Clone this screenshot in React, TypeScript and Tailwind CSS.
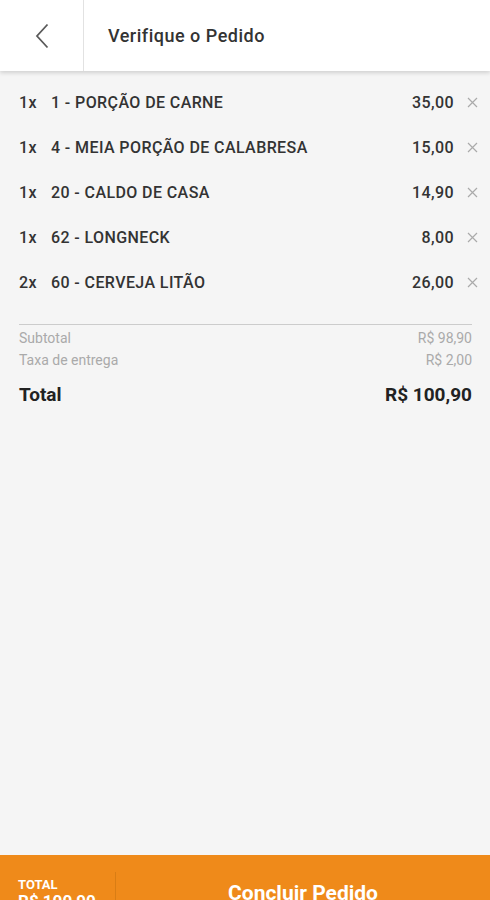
import React from "react";

type Item = { qty: string; name: string; price: string };

const items: Item[] = [
  { qty: "1x", name: "1 - PORÇÃO DE CARNE", price: "35,00" },
  { qty: "1x", name: "4 - MEIA PORÇÃO DE CALABRESA", price: "15,00" },
  { qty: "1x", name: "20 - CALDO DE CASA", price: "14,90" },
  { qty: "1x", name: "62 - LONGNECK", price: "8,00" },
  { qty: "2x", name: "60 - CERVEJA LITÃO", price: "26,00" },
];

const Row = ({ item }: { item: Item }) => {
  return (
    <div className="flex items-center h-[45px] text-[16px] tracking-[0.4px] font-medium text-[#333]">
      <span className="w-[32px]">{item.qty}</span>
      <span className="flex-1">{item.name}</span>
      <span className="text-right">{item.price}</span>
      <span className="w-[24px] flex justify-end">
        <svg width="11" height="11" viewBox="0 0 11 11" stroke="#aaa" strokeWidth="1.2">
          <path d="M1 1 L10 10 M10 1 L1 10" />
        </svg>
      </span>
    </div>
  );
};

export default function App() {
  return (
    <div
      className="w-[490px] h-[900px] bg-[#f5f5f5] flex flex-col overflow-hidden"
      style={{ fontFamily: "Roboto, 'Liberation Sans', sans-serif" }}
    >
      {/* header */}
      <div className="h-[71px] bg-white flex shadow-[0_2px_4px_rgba(0,0,0,0.15)] relative z-10">
        <div className="w-[84px] flex items-center justify-center border-r border-[#e2e2e2]">
          <svg width="14" height="26" viewBox="0 0 14 26" fill="none" stroke="#5a5a5a" strokeWidth="1.8">
            <path d="M12.5 1.5 L2 13 L12.5 24.5" />
          </svg>
        </div>
        <div className="flex items-center pl-[24px] text-[18px] tracking-[0.5px] font-medium text-[#333]">
          Verifique o Pedido
        </div>
      </div>

      {/* items */}
      <div className="flex-1 pl-[19px] pr-[12px] pt-[9px]">
        {items.map((it, i) => (
          <Row key={i} item={it} />
        ))}

        <div className="mt-[19px] mr-[6px] border-t border-[#ccc] pt-[2px]">
          <div className="flex justify-between text-[14px] text-[#aaa] h-[22px] items-center">
            <span>Subtotal</span>
            <span>R$ 98,90</span>
          </div>
          <div className="flex justify-between text-[14px] text-[#aaa] h-[22px] items-center">
            <span>Taxa de entrega</span>
            <span>R$ 2,00</span>
          </div>
          <div className="flex justify-between text-[19px] font-bold text-[#222] mt-[8px] h-[32px] items-center">
            <span>Total</span>
            <span>R$ 100,90</span>
          </div>
        </div>
      </div>

      {/* footer */}
      <div className="h-[45px] bg-[#ef8a1a] flex text-white">
        <div className="w-[115px] pl-[18px] pt-[23px]">
          <div className="text-[13px] font-bold leading-[14px]">TOTAL</div>
          <div className="text-[17px] font-bold leading-[18px]">R$ 100,90</div>
        </div>
        <div className="w-px bg-[#d97d14] mt-[17px]" />
        <div className="flex-1 flex justify-center pt-[26px]">
          <span className="text-[21px] font-bold leading-[24px]">Concluir Pedido</span>
        </div>
      </div>
    </div>
  );
}
